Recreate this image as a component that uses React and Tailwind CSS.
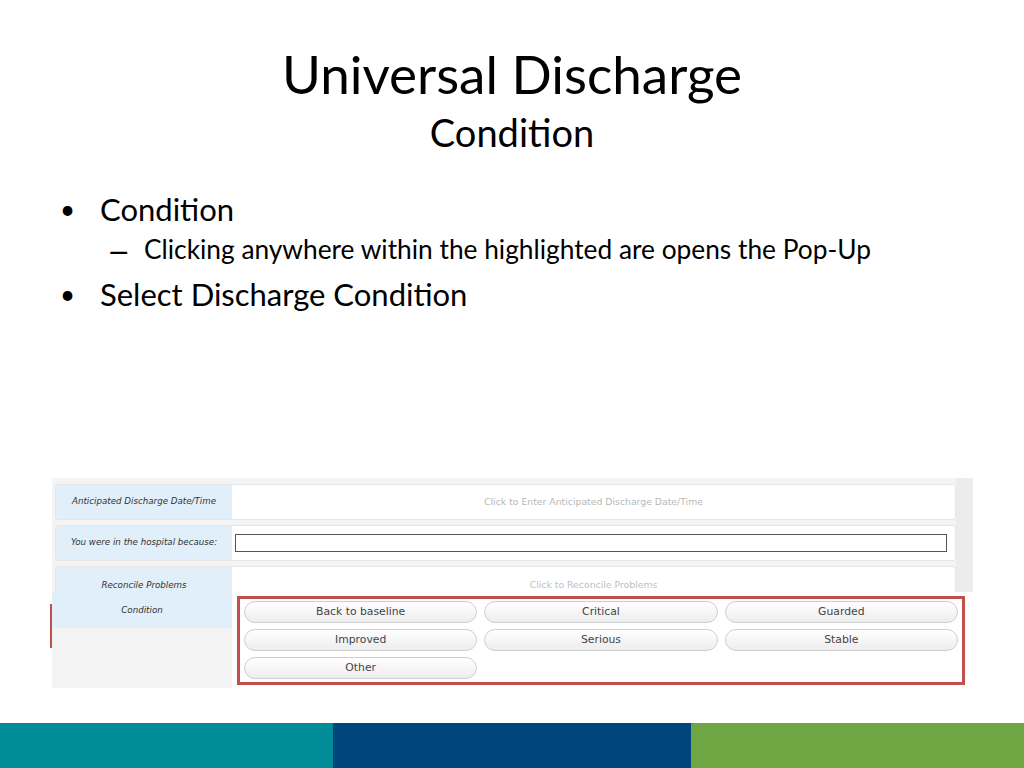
import React from "react";

const lato = { fontFamily: "Lato, 'Open Sans', sans-serif" };

function FormRow({ label, children, cut }) {
  return (
    <div
      className={`flex rounded-[3px] border border-[#e6e6e6] bg-white overflow-hidden ${
        cut ? "h-[26px] border-b-0 rounded-b-none" : "h-[36px]"
      }`}
    >
      <div
        className={`w-[176px] shrink-0 bg-[#e1effb] flex justify-center text-[8.7px] italic text-[#333] ${
          cut ? "items-end" : "items-center"
        }`}
      >
        {label}
      </div>
      <div className={`flex-1 flex justify-center ${cut ? "items-end" : "items-center"}`}>{children}</div>
    </div>
  );
}

function Pill({ children }) {
  return (
    <div className="h-[22px] rounded-full border border-[#cfcfcf] bg-gradient-to-b from-white to-[#ededed] flex items-center justify-center text-[10.8px] text-[#444]">
      {children}
    </div>
  );
}

export default function App() {
  const options = ["Back to baseline", "Critical", "Guarded", "Improved", "Serious", "Stable", "Other"];

  return (
    <div className="w-[1024px] h-[768px] bg-white flex flex-col overflow-hidden">
      {/* title */}
      <div className="flex flex-col items-center pt-[42px] text-black" style={lato}>
        <div className="text-[53px] leading-[64px]">Universal Discharge</div>
        <div className="text-[38px] leading-[42px] mt-[5px]">Condition</div>
      </div>

      {/* bullets */}
      <div className="pl-[60px] mt-[38px] text-black" style={lato}>
        <div className="flex items-center h-[36px] text-[31px]">
          <span className="w-[40px] text-[26px]">•</span>
          <span>Condition</span>
        </div>
        <div className="flex items-center h-[36px] pl-[52px] text-[26.3px] mt-[5px]">
          <span className="w-[32px] leading-none">
            <span className="inline-block origin-center scale-x-[1.6] scale-y-[1.3] -translate-x-[1px]">–</span>
          </span>
          <span>Clicking anywhere within the highlighted are opens the Pop-Up</span>
        </div>
        <div className="flex items-center h-[40px] text-[31px] mt-[6px]">
          <span className="w-[40px] text-[26px]">•</span>
          <span>Select Discharge Condition</span>
        </div>
      </div>

      {/* embedded screenshot */}
      <div className="mt-[164px] ml-[52px] w-[921px]" style={{ fontFamily: "'DejaVu Sans', Verdana, sans-serif" }}>
        <div className="flex bg-[#f4f4f4]">
          <div className="flex-1 flex flex-col gap-[5px] pt-[6px] pl-[3px]">
            <FormRow label="Anticipated Discharge Date/Time">
              <span className="text-[9.3px] text-[#b8b8b8]">Click to Enter Anticipated Discharge Date/Time</span>
            </FormRow>
            <FormRow label="You were in the hospital because:">
              <div className="w-full ml-[3px] mr-[8px] h-[18px] border border-[#555] bg-white" />
            </FormRow>
            <FormRow label="Reconcile Problems" cut>
              <span className="text-[9.3px] text-[#c0c0c0]">Click to Reconcile Problems</span>
            </FormRow>
          </div>
          <div className="w-[17px] bg-[#ececec]" />
        </div>

        <div className="flex relative h-[96px]">
          <div className="absolute left-[-2px] top-[12px] h-[44px] w-[2px] bg-[#c0504d]" />
          <div className="w-[180px] shrink-0 flex flex-col">
            <div className="h-[36px] bg-[#e1effb] flex items-center justify-center text-[8.7px] italic text-[#333] pt-[1px]">
              Condition
            </div>
            <div className="flex-1 bg-[#f3f3f3]" />
          </div>
          <div className="w-[733px] bg-white pl-[5px] pt-[4px] pb-[3px]">
            <div className="h-full border-[3px] border-[#c0504d] grid grid-cols-3 gap-x-[7px] gap-y-[6px] content-start px-[4px] pt-[2px]">
              {options.map((o) => (
                <Pill key={o}>{o}</Pill>
              ))}
            </div>
          </div>
        </div>
      </div>

      {/* footer bands */}
      <div className="mt-auto flex h-[45px]">
        <div className="w-[333px] bg-[#008b99]" />
        <div className="w-[358px] bg-[#00457c]" />
        <div className="flex-1 bg-[#6fa644]" />
      </div>
    </div>
  );
}
